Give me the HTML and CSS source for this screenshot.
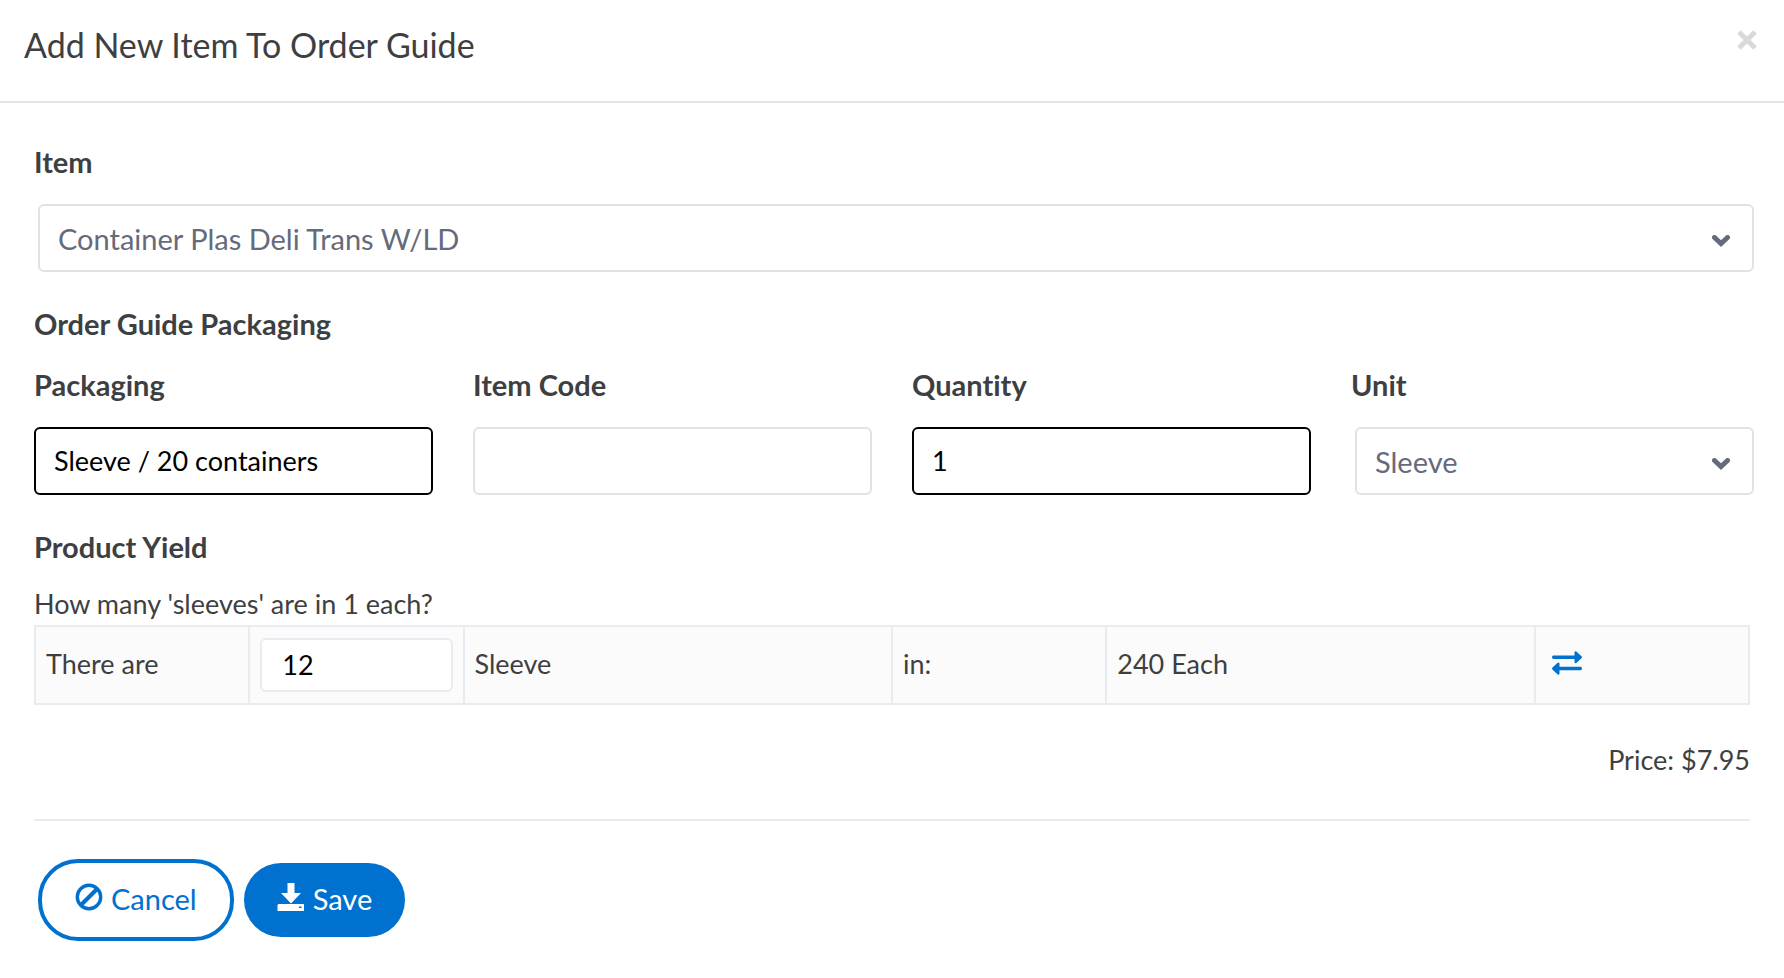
FILE: index.html
```
<!DOCTYPE html>
<html lang="en">
<head>
<meta charset="utf-8">
<meta name="viewport" content="width=device-width, initial-scale=1">
<title>Add New Item To Order Guide</title>
<link rel="stylesheet" href="styles.css">
</head>
<body>
<div class="dialog" role="dialog" aria-labelledby="dialog-title">
  <header class="dialog-header">
    <h1 class="dialog-title" id="dialog-title">Add New Item To Order Guide</h1>
    <button class="close-button" type="button" aria-label="Close">
      <svg class="close-icon" viewBox="0 0 20 20" aria-hidden="true"><path d="M2 2 18 18M18 2 2 18"/></svg>
    </button>
  </header>
  <form class="dialog-body">
    <label class="label" for="item">Item</label>
    <div class="select-box">
      <select class="control select" id="item"><option>Container Plas Deli Trans W/LD</option></select>
      <svg class="chevron" viewBox="0 0 18 12" aria-hidden="true"><path d="M2.500 2.500 9 8.500 15.500 2.500"/></svg>
    </div>

    <h2 class="label section-title">Order Guide Packaging</h2>
    <div class="fields">
      <div class="field">
        <label class="label" for="packaging">Packaging</label>
        <input class="control filled" id="packaging" type="text" value="Sleeve / 20 containers">
      </div>
      <div class="field">
        <label class="label" for="code">Item Code</label>
        <input class="control" id="code" type="text">
      </div>
      <div class="field">
        <label class="label" for="quantity">Quantity</label>
        <input class="control filled" id="quantity" type="text" value="1">
      </div>
      <div class="field">
        <label class="label" for="unit">Unit</label>
        <div class="select-box">
          <select class="control select" id="unit"><option>Sleeve</option></select>
          <svg class="chevron" viewBox="0 0 18 12" aria-hidden="true"><path d="M2.500 2.500 9 8.500 15.500 2.500"/></svg>
        </div>
      </div>
    </div>

    <h2 class="label section-title">Product Yield</h2>
    <label class="question" for="yield">How many 'sleeves' are in 1 each?</label>
    <table class="yield-table">
      <colgroup><col class="narrow"><col class="narrow"><col class="wide"><col class="narrow"><col class="wide"><col class="narrow"></colgroup>
      <tbody>
        <tr>
          <td>There are</td>
          <td><input class="control small" id="yield" type="text" value="12"></td>
          <td>Sleeve</td>
          <td>in:</td>
          <td>240 Each</td>
          <td>
            <button class="swap-button" type="button" aria-label="Swap units">
              <svg class="swap-icon" viewBox="0 0 30 24" aria-hidden="true"><path d="M1.500 4.500H22.500V1.500Q22.500 .3 23.500 .3 24.300 .3 24.900 .9L29.500 5.300Q30.400 6.300 29.500 7.200L24.900 11.600Q22.500 13 22.500 11V8H1.500Q0 8 0 6.200T1.500 4.500ZM28.500 19.300H7.500V22.300Q7.500 23.700 6.500 23.700 5.700 23.700 5.100 23.100L.5 18.500Q-.4 17.500 .5 16.600L5.100 12.200Q7.500 10.800 7.500 12.800V15.800H28.500Q30 15.800 30 17.500T28.500 19.300Z"/></svg>
            </button>
          </td>
        </tr>
      </tbody>
    </table>
    <p class="price">Price: $7.95</p>
    <div class="actions">
      <button class="button button-outline" type="button">
        <svg class="button-icon" viewBox="0 0 28 28" aria-hidden="true"><circle cx="14" cy="14" r="11.700" fill="none" stroke="currentColor" stroke-width="3.400"/><path d="M6 22 22 6" stroke="currentColor" stroke-width="4"/></svg>
        Cancel
      </button>
      <button class="button button-solid" type="submit">
        <svg class="button-icon" viewBox="0 0 28 28" aria-hidden="true"><path fill="currentColor" fill-rule="evenodd" d="M10.500 0H17.500V10H24L14 20.500 4 10H10.500ZM1.500 21H26.500L27 21.500V28H.5V22ZM22 23.500V25H24.500V23.500Z"/></svg>
        Save
      </button>
    </div>
  </form>
</div>
</body>
</html>
```
FILE: styles.css
```
* {
  box-sizing: border-box;
}

body {
  margin: 0;
  background: #fff;
  color: #3e3f42;
  font: 27px/32px Lato, "Open Sans", sans-serif;
  font-variant-ligatures: none;
}

button,
input,
select {
  margin: 0;
  font: inherit;
}

svg {
  display: block;
}

.dialog-header {
  display: flex;
  align-items: flex-start;
  justify-content: space-between;
  padding: 25px 24px 36px;
  border-bottom: 2px solid #e3e5e6;
}

.dialog-title {
  margin: 0;
  font-size: 34px;
  line-height: 40px;
  font-weight: 400;
}

.close-button {
  padding: 5px 3px;
  border: 0;
  background: none;
  color: #d8dada;
}

.close-icon {
  width: 20px;
  height: 20px;
  fill: none;
  stroke: currentColor;
  stroke-width: 5;
}

.dialog-body {
  padding: 39px 34px;
}

.label {
  display: block;
  margin: 0 0 22px;
  font-size: 29px;
  line-height: 40px;
  font-weight: 700;
}

.section-title {
  margin: 32px 0 21px;
}

.control {
  display: block;
  width: 100%;
  height: 68px;
  padding: 0 18px 2px;
  border: 2px solid #dfe3e8;
  border-radius: 6px;
  outline: 0;
  background: #fff;
  color: #000;
}

.filled {
  border-color: #000;
}

.select-box {
  display: grid;
  grid-template-columns: 100%;
  align-items: center;
  margin: 0 -4px 0 4px;
}

.select-box > * {
  grid-area: 1 / 1;
}

.select {
  appearance: none;
  padding: 2px 18px 0;
  color: #656b7b;
  font-size: 29px;
}

.chevron {
  justify-self: end;
  width: 18px;
  height: 12px;
  margin-top: 5px;
  margin-right: 24px;
  fill: none;
  stroke: #656b7b;
  stroke-width: 5;
  stroke-linecap: round;
  pointer-events: none;
}

.fields {
  display: grid;
  grid-template-columns: repeat(4, minmax(0, 1fr));
  gap: 40px;
}

.question {
  display: block;
  margin-bottom: 5px;
}

.yield-table {
  width: 100%;
  border-collapse: collapse;
  table-layout: fixed;
  background: #fbfbfc;
}

.yield-table td {
  height: 78px;
  padding: 0 10px 2px;
  border: 2px solid #e8ecf0;
}

.narrow {
  width: 12.5%;
}

.wide {
  width: 25%;
}

.yield-table .small {
  height: 54px;
  margin-top: 2px;
  padding: 0 20px 2px;
  border-color: #e8ecf0;
}

.swap-button {
  display: block;
  padding: 0 6px 2px;
  border: 0;
  background: none;
  color: #0071ce;
}

.swap-icon {
  width: 30px;
  height: 24px;
  fill: currentColor;
}

.price {
  margin: 39px 0 0;
  text-align: right;
}

.actions {
  display: flex;
  align-items: center;
  gap: 10px;
  margin-top: 43px;
  padding: 38px 4px;
  border-top: 2px solid #e8ecf0;
}

.button {
  display: flex;
  align-items: center;
  gap: 8px;
  height: 74px;
  padding: 0 33px 2px;
  border: 0;
  border-radius: 40px;
  font-size: 29px;
  line-height: 40px;
}

.button-outline {
  height: 82px;
  border: 4px solid #0071ce;
  background: #fff;
  color: #0071ce;
}

.button-solid {
  background: #0071ce;
  color: #fff;
}

.button-icon {
  width: 28px;
  height: 28px;
  margin-bottom: 4px;
}
```
